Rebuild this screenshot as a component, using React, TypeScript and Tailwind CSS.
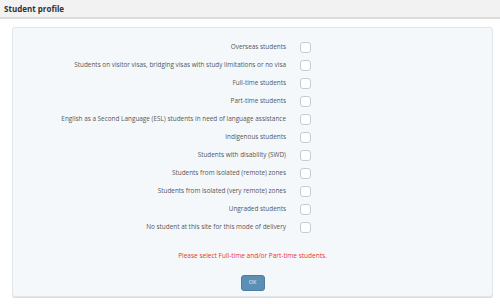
const options = [
  "Overseas students",
  "Students on visitor visas, bridging visas with study limitations or no visa",
  "Full-time students",
  "Part-time students",
  "English as a Second Language (ESL) students in need of language assistance",
  "Indigenous students",
  "Students with disability (SWD)",
  "Students from isolated (remote) zones",
  "Students from isolated (very remote) zones",
  "Ungraded students",
  "No student at this site for this mode of delivery",
];

export default function App() {
  return (
    <div
      className="w-[500px] h-[304px] bg-white overflow-hidden"
      style={{ fontFamily: '"Open Sans", "Noto Sans", sans-serif' }}
    >
      {/* HEADER */}
      <div className="h-[19px] bg-[#f2f2f2] border-b-2 border-[#dcdcdc] flex items-center px-[4px]">
        <h1 className="text-[8px] font-bold text-[#333] leading-none">
          Student profile
        </h1>
      </div>

      {/* PANEL */}
      <div className="ml-[12px] mr-[7px] mt-[8px] h-[270px] bg-[#f5f8fb] border border-[#e1e6ea] rounded-[3px] shadow-[0_1px_0_#dcdcdc] pt-[10px] flex flex-col">
        {options.map((label) => (
          <label key={label} className="flex items-center h-[18px]">
            <span className="w-[273px] text-right text-[6.4px] text-[#555] leading-none">
              {label}
            </span>
            <input type="checkbox" className="sr-only" />
            <span className="ml-[14px] w-[11px] h-[11px] rounded-[3px] border border-[#c6ccd2] bg-white" />
          </label>
        ))}

        <p className="mt-[15px] text-center text-[6.5px] text-[#e8332f] leading-[10px]">
          Please select Full-time and/or Part-time students.
        </p>

        <div className="flex justify-center mt-[14px]">
          <button className="w-[24px] h-[16px] rounded-[3px] bg-[#5b8fb3] border border-[#4b7ea3] text-[5.5px] text-[#e8f0f6] leading-none">
            OK
          </button>
        </div>
      </div>
    </div>
  );
}
